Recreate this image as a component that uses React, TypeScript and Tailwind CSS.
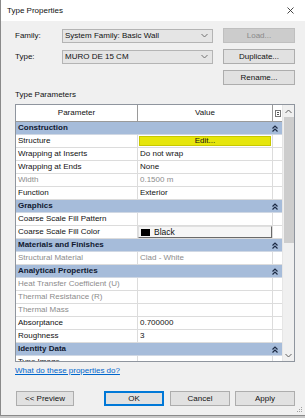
import React from 'react';

type Row =
  | { kind: 'group'; label: string }
  | { kind: 'row'; label: string; value?: string; dim?: boolean; edit?: boolean; swatch?: boolean };

const rows: Row[] = [
  { kind: 'group', label: 'Construction' },
  { kind: 'row', label: 'Structure', edit: true },
  { kind: 'row', label: 'Wrapping at Inserts', value: 'Do not wrap' },
  { kind: 'row', label: 'Wrapping at Ends', value: 'None' },
  { kind: 'row', label: 'Width', value: '0.1500 m', dim: true },
  { kind: 'row', label: 'Function', value: 'Exterior' },
  { kind: 'group', label: 'Graphics' },
  { kind: 'row', label: 'Coarse Scale Fill Pattern' },
  { kind: 'row', label: 'Coarse Scale Fill Color', swatch: true },
  { kind: 'group', label: 'Materials and Finishes' },
  { kind: 'row', label: 'Structural Material', value: 'Clad - White', dim: true },
  { kind: 'group', label: 'Analytical Properties' },
  { kind: 'row', label: 'Heat Transfer Coefficient (U)', dim: true },
  { kind: 'row', label: 'Thermal Resistance (R)', dim: true },
  { kind: 'row', label: 'Thermal Mass', dim: true },
  { kind: 'row', label: 'Absorptance', value: '0.700000' },
  { kind: 'row', label: 'Roughness', value: '3' },
  { kind: 'group', label: 'Identity Data' },
  { kind: 'row', label: 'Type Image' },
];

function Chevron({ up = false, className = '' }: { up?: boolean; className?: string }) {
  return (
    <svg width="7" height="5" viewBox="0 0 7 5" className={className}>
      <path d={up ? 'M0.5 4 L3.5 1 L6.5 4' : 'M0.5 1 L3.5 4 L6.5 1'} fill="none" stroke="currentColor" strokeWidth="1" />
    </svg>
  );
}

function DoubleUp() {
  return (
    <svg width="6" height="7" viewBox="0 0 6 7" className="text-[#1c2a44]">
      <path d="M0.5 3.5 L3 1 L5.5 3.5 M0.5 6.5 L3 4 L5.5 6.5" fill="none" stroke="currentColor" strokeWidth="1.2" />
    </svg>
  );
}

function Combo({ text }: { text: string }) {
  return (
    <div className="w-[151px] h-[14px] bg-[#e5e5e5] border border-[#b4b4b4] flex items-center pl-[2px] pr-[4px]">
      <span className="flex-1">{text}</span>
      <Chevron className="text-[#707070]" />
    </div>
  );
}

function Btn({ children, disabled = false }: { children: React.ReactNode; disabled?: boolean }) {
  return (
    <div
      className={
        disabled
          ? 'w-[72px] h-[15px] bg-[#cccccc] border border-[#bfbfbf] text-[#8a8a8a] flex items-center justify-center'
          : 'w-[72px] h-[15px] bg-[#e1e1e1] border border-[#adadad] flex items-center justify-center'
      }
    >
      {children}
    </div>
  );
}

export default function App() {
  return (
    <div className="w-[305px] h-[418px] bg-[#c8c8c8] overflow-hidden font-['Liberation_Sans',Arial,sans-serif] text-[8px] leading-[10px] text-[#111]">
      <div className="h-[416px] bg-[#f0f0f0] border-l border-b border-[#8a8a8a] flex flex-col">
        {/* title bar */}
        <div className="h-[21px] bg-white flex items-center justify-between pl-[6px] pr-[11px] shrink-0">
          <span className="text-[8px]">Type Properties</span>
          <svg width="7" height="7" viewBox="0 0 7 7" className="text-[#333]">
            <path d="M0.5 0.5 L6.5 6.5 M6.5 0.5 L0.5 6.5" stroke="currentColor" strokeWidth="0.9" />
          </svg>
        </div>

        {/* family / type */}
        <div className="mt-[7px] pl-[14px] flex flex-col gap-[6px]">
          <div className="h-[15px] flex items-center">
            <span className="w-[47px]">Family:</span>
            <Combo text="System Family: Basic Wall" />
            <div className="ml-[10px]">
              <Btn disabled>Load...</Btn>
            </div>
          </div>
          <div className="h-[15px] flex items-center">
            <span className="w-[47px]">Type:</span>
            <Combo text="MURO DE 15 CM" />
            <div className="ml-[10px]">
              <Btn>Duplicate...</Btn>
            </div>
          </div>
          <div className="h-[15px] flex items-center pl-[208px]">
            <Btn>Rename...</Btn>
          </div>
        </div>

        <div className="mt-[5px] pl-[14px]">Type Parameters</div>

        {/* parameter table */}
        <div className="mt-[4px] ml-[14px] w-[280px] h-[258px] border border-[#8f959e] bg-white flex shrink-0">
          <div className="w-[266px] flex flex-col overflow-hidden">
            <div className="h-[17px] flex border-b border-[#9a9a9a] shrink-0">
              <div className="w-[122px] border-r border-[#9a9a9a] flex items-center justify-center">Parameter</div>
              <div className="w-[135px] border-r border-[#9a9a9a] flex items-center justify-center">Value</div>
              <div className="flex-1 flex items-center justify-center">
                <div className="w-[6px] h-[7px] border border-[#777] flex flex-col justify-center gap-[1px] px-[1px]">
                  <div className="h-px bg-[#555]" />
                  <div className="h-px bg-[#555]" />
                </div>
              </div>
            </div>
            {rows.map((r, i) =>
              r.kind === 'group' ? (
                <div key={i} className="h-[13px] shrink-0 bg-[#a6bcda] border-b border-[#d0d8e4] flex items-center pl-[2px] pr-[4px]">
                  <span className="flex-1 font-bold text-[#101830]">{r.label}</span>
                  <DoubleUp />
                </div>
              ) : (
                <div key={i} className="h-[13px] shrink-0 flex border-b border-[#dcdcdc]">
                  <div className={`w-[122px] border-r border-[#dcdcdc] flex items-center pl-[2px] ${r.dim ? 'text-[#8c8c8c]' : ''}`}>
                    {r.label}
                  </div>
                  <div className={`w-[135px] border-r border-[#dcdcdc] flex items-center ${r.dim ? 'text-[#8c8c8c]' : ''}`}>
                    {r.edit ? (
                      <div className="ml-[1px] w-[132px] h-[10px] bg-[#e6e60c] border border-[#c8c800] flex items-center justify-center">
                        Edit...
                      </div>
                    ) : r.swatch ? (
                      <div className="w-[134px] h-[12px] bg-[#f6f6f6] border border-[#e0e0e0] border-r-[#6a6a6a] border-b-[#6a6a6a] flex items-center pl-[2px] gap-[4px]">
                        <div className="w-[9px] h-[7px] bg-black" />
                        <span className="text-[8.5px]">Black</span>
                      </div>
                    ) : (
                      <span className="pl-[2px]">{r.value}</span>
                    )}
                  </div>
                  <div className="flex-1" />
                </div>
              )
            )}
          </div>
          {/* scrollbar */}
          <div className="flex-1 bg-[#f0f0f0] border-l border-[#e6e6e6] flex flex-col items-center">
            <div className="h-[12px] flex items-center justify-center text-[#606060]">
              <Chevron up />
            </div>
            <div className="w-[10px] h-[126px] bg-[#cdcdcd]" />
            <div className="flex-1" />
            <div className="h-[12px] flex items-center justify-center text-[#606060]">
              <Chevron />
            </div>
          </div>
        </div>

        <div className="mt-[4px] pl-[14px]">
          <span className="text-[#0066cc] underline">What do these properties do?</span>
        </div>

        {/* buttons */}
        <div className="mt-[15px] pl-[15px] flex items-center">
          <div className="w-[58px] h-[15px] bg-[#e1e1e1] border border-[#adadad] flex items-center justify-center">
            &lt;&lt; Preview
          </div>
          <div className="ml-[30px] w-[60px] h-[15px] bg-[#e1e1e1] border border-[#0078d7] shadow-[inset_0_0_0_1px_#0078d7] flex items-center justify-center">
            OK
          </div>
          <div className="ml-[6px] w-[60px] h-[15px] bg-[#e1e1e1] border border-[#adadad] flex items-center justify-center">
            Cancel
          </div>
          <div className="ml-[5px] w-[60px] h-[15px] bg-[#e1e1e1] border border-[#adadad] flex items-center justify-center">
            Apply
          </div>
        </div>

        <div className="flex-1 flex items-end justify-end pr-[2px] pb-[2px]">
          <svg width="6" height="6" viewBox="0 0 6 6" className="text-[#a0a0a0]">
            <rect x="4" y="0" width="1" height="1" fill="currentColor" />
            <rect x="2" y="2" width="1" height="1" fill="currentColor" />
            <rect x="4" y="2" width="1" height="1" fill="currentColor" />
            <rect x="0" y="4" width="1" height="1" fill="currentColor" />
            <rect x="2" y="4" width="1" height="1" fill="currentColor" />
            <rect x="4" y="4" width="1" height="1" fill="currentColor" />
          </svg>
        </div>
      </div>
    </div>
  );
}
